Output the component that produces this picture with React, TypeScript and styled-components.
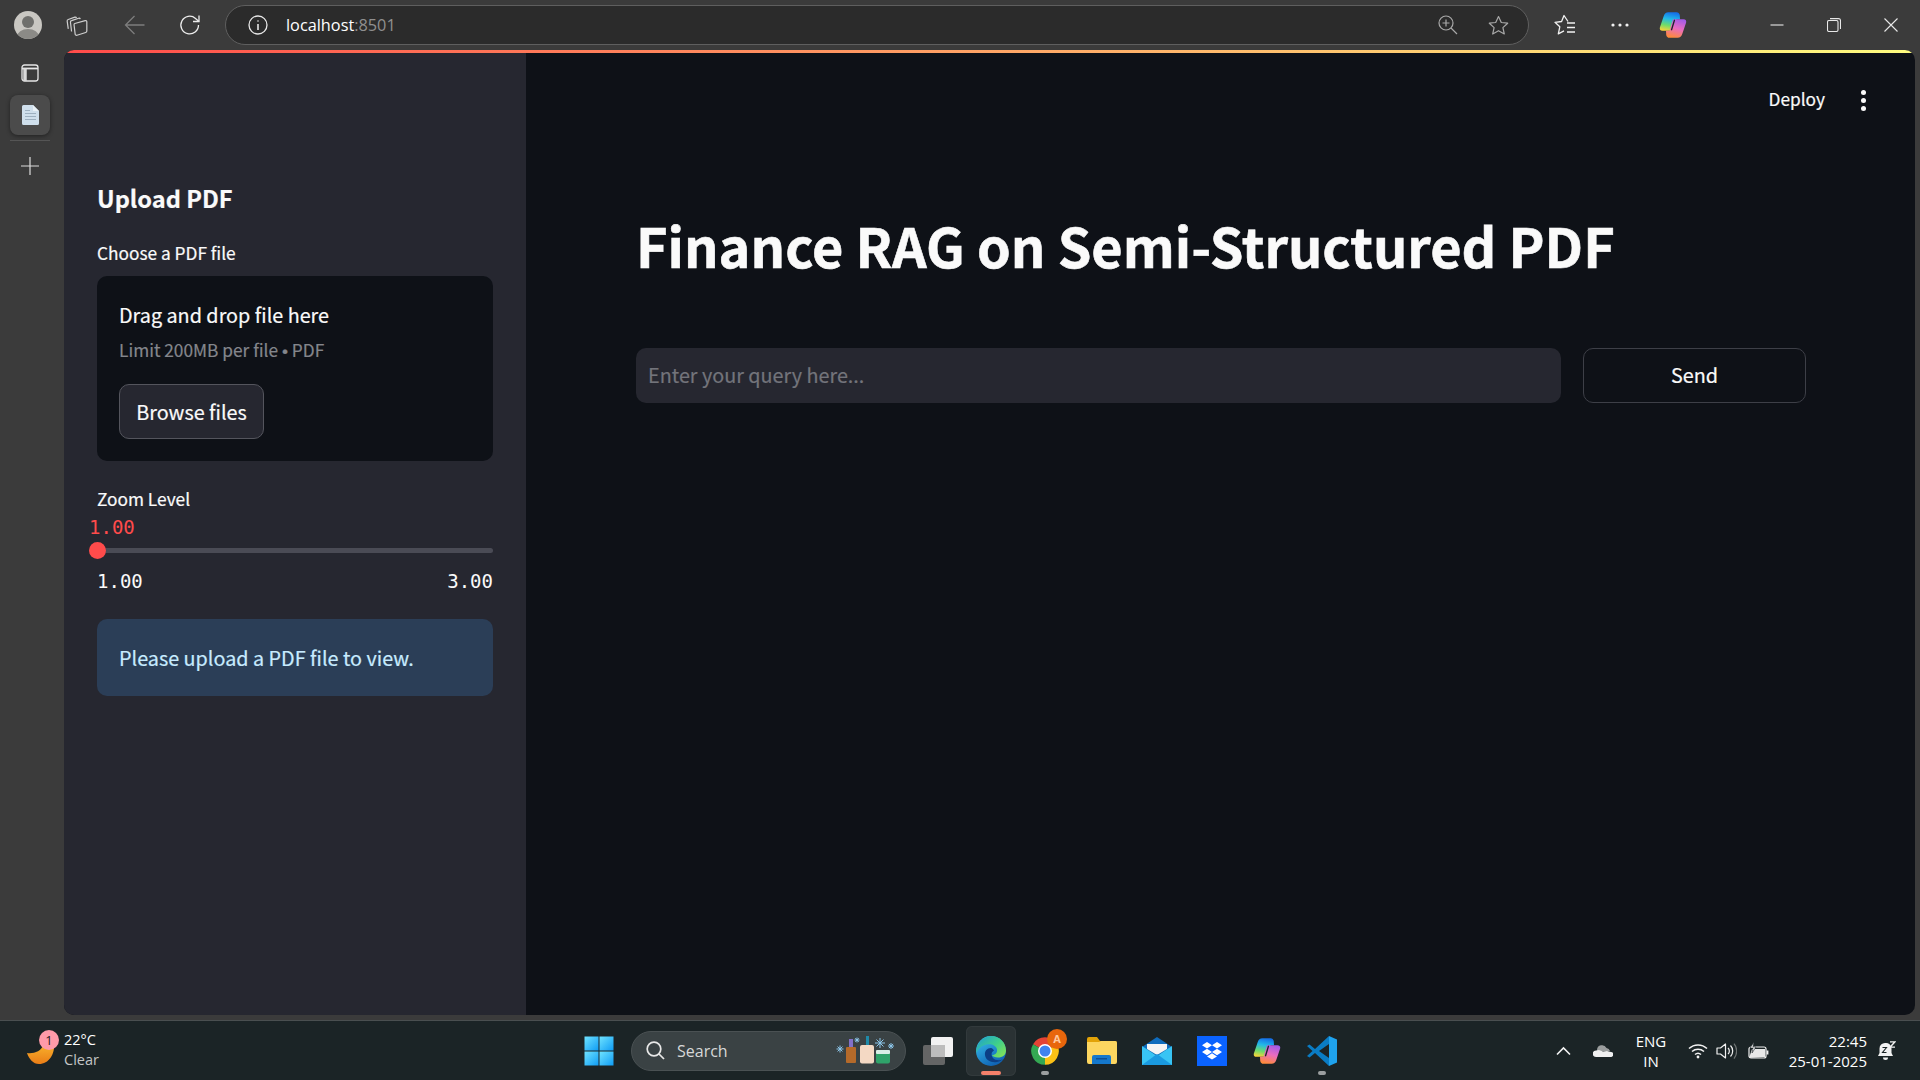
import React from "react";
import styled, { createGlobalStyle } from "styled-components";

const UI_FONT = `"Noto Sans CJK SC", "Noto Sans", sans-serif`;
const OS_FONT = `"Open Sans", "Noto Sans", sans-serif`;
const MONO_FONT = `"DejaVu Sans Mono", "Liberation Mono", monospace`;

const GlobalStyle = createGlobalStyle`
    html, body {
        margin: 0;
        padding: 0;
        width: 1920px;
        height: 1080px;
        overflow: hidden;
        background: #3b3b3b;
    }
    * {
        box-sizing: border-box;
    }
`;

const Page = styled.div`
    width: 1920px;
    height: 1080px;
    display: flex;
    flex-direction: column;
    background: #3b3b3b;
`;

/* browser toolbar */
const Toolbar = styled.div`
    height: 50px;
    flex: none;
    display: flex;
    align-items: center;
    color: #e8e8e8;
`;

const Slot = styled.div<{ $w: number; $ml?: number }>`
    width: ${(p) => p.$w}px;
    margin-left: ${(p) => p.$ml ?? 0}px;
    flex: none;
    display: flex;
    align-items: center;
    justify-content: center;
`;

const Avatar = styled.div`
    width: 28px;
    height: 28px;
    border-radius: 50%;
    background: #c9c7c2;
    overflow: hidden;
    display: flex;
`;

const AddressBar = styled.div`
    width: 1304px;
    height: 40px;
    margin-left: 7px;
    flex: none;
    display: flex;
    align-items: center;
    background: #2b2b2b;
    border: 1px solid #5f5f5f;
    border-radius: 20px;
`;

const InfoSlot = styled.div`
    width: 60px;
    flex: none;
    display: flex;
    justify-content: center;
    padding-left: 3px;
`;

const Url = styled.div`
    flex: 1;
    font-family: ${OS_FONT};
    font-size: 16.3px;
    color: #fff;
`;

const UrlPort = styled.span`
    color: #8f8f8f;
`;

const AddressIcons = styled.div`
    display: flex;
    align-items: center;
    gap: 30px;
    padding-right: 19px;
`;

const WindowButtons = styled.div`
    margin-left: 41px;
    display: flex;
`;

/* middle part */
const Middle = styled.div`
    flex: 1;
    min-height: 0;
    display: flex;
    padding: 0 5px 5px 0;
`;

const Rail = styled.div`
    width: 64px;
    flex: none;
    padding: 3px 14px 0 10px;
    display: flex;
    flex-direction: column;
`;

const RailButton = styled.div<{ $active?: boolean; $mt?: number }>`
    width: 40px;
    height: 40px;
    margin-top: ${(p) => p.$mt ?? 0}px;
    border-radius: 8px;
    display: flex;
    align-items: center;
    justify-content: center;
    background: ${(p) => (p.$active ? "#4b4b4b" : "transparent")};
    box-shadow: ${(p) => (p.$active ? "0 1px 4px rgba(0,0,0,0.45)" : "none")};
`;

const RailDivider = styled.div`
    height: 1px;
    margin-top: 5px;
    background: #555;
`;

const Window = styled.div`
    flex: 1;
    min-width: 0;
    display: flex;
    flex-direction: column;
    border-radius: 10px;
    overflow: hidden;
    background: #0e1117;
`;

const Decoration = styled.div`
    height: 3px;
    flex: none;
    background: linear-gradient(90deg, #ff4b4b, #fffd80);
`;

const AppRow = styled.div`
    flex: 1;
    min-height: 0;
    display: flex;
`;

const Sidebar = styled.aside`
    width: 462px;
    flex: none;
    background: #262730;
    padding: 127px 33px 0;
    display: flex;
    flex-direction: column;
    font-family: ${UI_FONT};
    color: #fafafa;
    -webkit-text-stroke: 0.2px currentColor;
`;

const SideHeading = styled.h2`
    margin: 0;
    font-size: 23.6px;
    line-height: 36px;
    font-weight: 700;
`;

const FieldLabel = styled.label<{ $mt: number }>`
    display: block;
    margin-top: ${(p) => p.$mt}px;
    font-size: 17.3px;
    line-height: 28px;
    font-weight: 400;
`;

const Dropzone = styled.div`
    margin-top: 9px;
    height: 185px;
    padding: 24px 22px 0;
    background: #0e1117;
    border-radius: 10px;
`;

const DropTitle = styled.div`
    font-size: 19.8px;
    line-height: 30px;
`;

const DropHint = styled.div`
    margin-top: 7px;
    font-size: 17.3px;
    line-height: 26px;
    color: #84868c;
`;

const Bullet = styled.span`
    font-family: "Liberation Sans", sans-serif;
`;

const BrowseButton = styled.button`
    margin-top: 20px;
    width: 145px;
    height: 55px;
    background: #262730;
    border: 1px solid #54555d;
    border-radius: 10px;
    color: #fafafa;
    font-family: ${UI_FONT};
    font-size: 19.8px;
    padding: 0 0 1px;
    -webkit-text-stroke: 0.2px currentColor;
`;

const SliderValue = styled.div`
    margin: 2px 0 0 -8px;
    font-family: ${MONO_FONT};
    font-size: 19px;
    line-height: 24px;
    color: #ff4b4b;
    -webkit-text-stroke: 0;
`;

const SliderTrack = styled.div`
    position: relative;
    margin-top: 3px;
    height: 16px;
    display: flex;
    align-items: center;
`;

const SliderRail = styled.div`
    width: 100%;
    height: 5px;
    border-radius: 3px;
    background: #4a4b55;
`;

const SliderThumb = styled.div`
    position: absolute;
    left: -8px;
    top: -0.5px;
    width: 17px;
    height: 17px;
    border-radius: 50%;
    background: #ff4b4b;
`;

const SliderTicks = styled.div`
    margin-top: 10px;
    display: flex;
    justify-content: space-between;
    font-family: ${MONO_FONT};
    font-size: 19px;
    line-height: 26px;
    color: #fafafa;
    -webkit-text-stroke: 0;
`;

const InfoBox = styled.div`
    margin-top: 25px;
    height: 77px;
    padding: 0 22px 1px;
    display: flex;
    align-items: center;
    background: #2b3e57;
    border-radius: 10px;
    font-size: 19.8px;
    color: #c7ebff;
`;

const Main = styled.main`
    flex: 1;
    min-width: 0;
    display: flex;
    flex-direction: column;
    font-family: ${UI_FONT};
    color: #fafafa;
`;

const Header = styled.header`
    height: 94px;
    flex: none;
    padding-right: 40px;
    display: flex;
    align-items: center;
    justify-content: flex-end;
    gap: 26px;
    font-size: 17.3px;
`;

const DeployLabel = styled.span`
    margin-bottom: 4px;
    -webkit-text-stroke: 0.2px currentColor;
`;

const Kebab = styled.div`
    width: 24px;
    display: flex;
    flex-direction: column;
    align-items: center;
    gap: 3px;
`;

const KebabDot = styled.span`
    width: 5px;
    height: 5px;
    border-radius: 50%;
    background: #fafafa;
`;

const Body = styled.div`
    padding: 57px 109px 0 110px;
`;

const Title = styled.h1`
    margin: 0;
    font-size: 54px;
    line-height: 82px;
    font-weight: 700;
    -webkit-text-stroke: 0.6px currentColor;
`;

const QueryRow = styled.div`
    margin-top: 62px;
    display: flex;
    gap: 22px;
`;

const QueryInput = styled.input`
    flex: 1;
    min-width: 0;
    height: 55px;
    padding: 0 12px 2px;
    border: none;
    outline: none;
    border-radius: 10px;
    background: #262730;
    color: #fafafa;
    font-family: ${UI_FONT};
    font-size: 19.8px;
    -webkit-text-stroke: 0.2px currentColor;
    &::placeholder {
        color: #73747b;
        opacity: 1;
    }
`;

const SendButton = styled.button`
    width: 223px;
    height: 55px;
    flex: none;
    background: #0e1117;
    border: 1px solid #3d3f47;
    border-radius: 10px;
    color: #fafafa;
    font-family: ${UI_FONT};
    font-size: 19.8px;
    padding: 0 0 2px;
    -webkit-text-stroke: 0.2px currentColor;
`;

/* taskbar */
const Taskbar = styled.footer`
    height: 60px;
    flex: none;
    display: flex;
    align-items: center;
    background: #1b2426;
    border-top: 1px solid #4a4f50;
    font-family: ${OS_FONT};
    color: #fff;
`;

const Weather = styled.div`
    width: 571px;
    flex: none;
    display: flex;
    align-items: center;
    padding-left: 27px;
    position: relative;
`;

const MoonWrap = styled.div`
    display: flex;
    margin-top: 7px;
`;

const WeatherBadge = styled.div`
    position: absolute;
    left: 39px;
    top: -2px;
    width: 20px;
    height: 20px;
    border-radius: 50%;
    background: #ff9aa9;
    color: #2a1a1c;
    font-size: 13px;
    line-height: 20px;
    text-align: center;
`;

const WeatherText = styled.div`
    margin-left: 9px;
    font-size: 14.5px;
    line-height: 20px;
    margin-top: -2px;
`;

const Muted = styled.div`
    color: #c4c6c6;
`;

const TaskIcon = styled.div<{ $w?: number; $active?: boolean }>`
    position: relative;
    width: ${(p) => p.$w ?? 55}px;
    height: 50px;
    flex: none;
    display: flex;
    align-items: center;
    justify-content: center;
    border-radius: 6px;
    background: ${(p) => (p.$active ? "#2a3234" : "transparent")};
    box-shadow: ${(p) => (p.$active ? "inset 0 0 0 1px #323a3c" : "none")};
`;

const RunPill = styled.span<{ $active?: boolean }>`
    position: absolute;
    left: 50%;
    bottom: 1px;
    transform: translateX(-50%);
    width: ${(p) => (p.$active ? 20 : 8)}px;
    height: 4px;
    border-radius: 2px;
    background: ${(p) => (p.$active ? "#f4806a" : "#9b9fa0")};
`;

const ChromeBadge = styled.span`
    position: absolute;
    left: 31px;
    top: 3px;
    width: 20px;
    height: 20px;
    border-radius: 50%;
    background: #e8660c;
    color: #ffc9a0;
    font-size: 11px;
    font-weight: 700;
    line-height: 20px;
    text-align: center;
`;

const SearchPill = styled.div`
    width: 275px;
    height: 40px;
    margin: 0 3px 0 5px;
    flex: none;
    display: flex;
    align-items: center;
    padding: 0 9px 0 14px;
    background: #3a4244;
    border: 1px solid #4a5153;
    border-radius: 20px;
    font-size: 16px;
    color: #d6d8d8;
`;

const SearchText = styled.span`
    flex: 1;
    margin-left: 12px;
`;

const Tray = styled.div`
    margin-left: auto;
    padding-right: 13px;
    display: flex;
    align-items: center;
`;

const TrayText = styled.div<{ $w: number }>`
    width: ${(p) => p.$w}px;
    flex: none;
    font-size: 15px;
    line-height: 20px;
    text-align: center;
`;

const Clock = styled.div`
    width: 91px;
    flex: none;
    font-size: 15px;
    line-height: 20px;
    text-align: right;
    white-space: nowrap;
`;

/* icons */
function Tabs() {
    return (
        <svg width="24" height="24" viewBox="0 0 22 22" fill="none" stroke="#cfcfcf" strokeWidth="1.1">
            <path d="M3 14.5 2 7.5c-.1-.8.3-1.3 1-1.5l6-2.2c.8-.2 1.3.1 1.5.8" />
            <path d="M6 17 5 8.5c-.1-.8.3-1.3 1-1.5l6.5-2.2c.8-.2 1.3.1 1.5.8" />
            <path d="M9 9.6 18.5 7c.8-.2 1.5.3 1.5 1.1v8.4c0 .7-.4 1.2-1 1.4L11 20.4c-.9.2-1.6-.3-1.7-1.2L8.3 10.800c-.1-.6.2-1 .7-1.2Z" />
        </svg>
    );
}

function Back() {
    return (
        <svg width="22" height="22" viewBox="0 0 22 22" fill="none" stroke="#7d7d7d" strokeWidth="1.3">
            <path d="M1.5 11h19M10.5 2 1.5 11l9 9" />
        </svg>
    );
}

function Refresh() {
    return (
        <svg width="22" height="22" viewBox="0 0 22 22" fill="none" stroke="#ededed" strokeWidth="1.3">
            <path d="M19.5 11a8.8 8.8 0 1 1-3-6.6L20 7.5" />
            <path d="M20 1.5v6h-6" />
        </svg>
    );
}

function Info() {
    return (
        <svg width="20" height="20" viewBox="0 0 20 20" fill="none" stroke="#e8e8e8" strokeWidth="1.3">
            <circle cx="10" cy="10" r="9" />
            <path d="M10 9v6" strokeWidth="1.6" />
            <circle cx="10" cy="6" r=".8" fill="#e8e8e8" stroke="none" />
        </svg>
    );
}

function ZoomIn() {
    return (
        <svg width="20" height="20" viewBox="0 0 20 20" fill="none" stroke="#a8a8a8" strokeWidth="1.2">
            <circle cx="8" cy="8" r="7" />
            <path d="M13 13l6 6M4.5 8h7M8 4.5v7" />
        </svg>
    );
}

function StarIcon() {
    return (
        <svg width="21" height="21" viewBox="0 0 21 21" fill="none" stroke="#a8a8a8" strokeWidth="1.2">
            <path d="M10.5 1.5l2.8 6 6.4.7-4.8 4.4 1.4 6.4-5.8-3.3-5.8 3.3 1.4-6.4L1.3 8.2l6.4-.7z" strokeLinejoin="round" />
        </svg>
    );
}

function Favorites() {
    return (
        <svg width="22" height="22" viewBox="0 0 22 22" fill="none" stroke="#f2f2f2" strokeWidth="1.3">
            <path d="M14 7.5 10 1.5 7.6 7.5 1 8.3l4.8 4.5-1.5 7 5.7-3" strokeLinejoin="round" />
            <path d="M13 9h8M13 13.5h8M13 18h8" />
        </svg>
    );
}

function Dots() {
    return (
        <svg width="18" height="4" viewBox="0 0 18 4" fill="#f2f2f2">
            <circle cx="2" cy="2" r="1.6" />
            <circle cx="9" cy="2" r="1.6" />
            <circle cx="16" cy="2" r="1.6" />
        </svg>
    );
}

function Copilot({ id, size }: { id: string; size: number }) {
    return (
        <svg width={size} height={size} viewBox="0 0 24 24">
            <defs>
                <linearGradient id={id + "a"} x1="0.5" y1="0" x2="0.3" y2="1">
                    <stop offset="0" stopColor="#1570e8" />
                    <stop offset="0.35" stopColor="#22b8e8" />
                    <stop offset="0.7" stopColor="#6fdc6a" />
                    <stop offset="1" stopColor="#f8d43a" />
                </linearGradient>
                <linearGradient id={id + "b"} x1="0.7" y1="0" x2="0.4" y2="1">
                    <stop offset="0" stopColor="#a25be8" />
                    <stop offset="0.5" stopColor="#ea6cc0" />
                    <stop offset="1" stopColor="#ff8a3c" />
                </linearGradient>
            </defs>
            <path
                d="M8 1H15C16.500 1 17.500 2 17.800 3.500L18 7H15L12 17H3C1 17 .3 15.500 .8 14L4 4.500C4.700 2.300 6 1 8 1Z"
                fill={`url(#${id}a)`}
            />
            <path
                d="M16 23H9C7.500 23 6.500 22 6.200 20.500L6 17H9L12 7H21C23 7 23.700 8.500 23.200 10L20 19.500C19.300 21.700 18 23 16 23Z"
                fill={`url(#${id}b)`}
            />
            <path d="M13.200 8 10.800 16" stroke="#20242a" strokeWidth="1.200" strokeLinecap="round" />
        </svg>
    );
}

function Minimize() {
    return (
        <svg width="14" height="14" viewBox="0 0 14 14" stroke="#e8e8e8" strokeWidth="1.1">
            <path d="M0.5 7h13" />
        </svg>
    );
}

function Restore() {
    return (
        <svg width="14" height="14" viewBox="0 0 14 14" fill="none" stroke="#e8e8e8" strokeWidth="1.1">
            <rect x="0.5" y="2.5" width="10.5" height="11" rx="1.5" />
            <path d="M3 .6h8.500c1 0 2 1 2 2V11" />
        </svg>
    );
}

function Close() {
    return (
        <svg width="14" height="14" viewBox="0 0 14 14" stroke="#e8e8e8" strokeWidth="1.1">
            <path d="M.5.5l13 13M13.500.5l-13 13" />
        </svg>
    );
}

function PanelIcon() {
    return (
        <svg width="18" height="18" viewBox="0 0 18 18" fill="none" stroke="#e6e6e6" strokeWidth="1.3">
            <rect x="1" y="1" width="16" height="16" rx="2.5" />
            <path d="M1 4.500h16" strokeWidth="1.800" />
            <path d="M4 4.500V17" strokeWidth="3.500" stroke="#d9d9d9" />
        </svg>
    );
}

function DocIcon() {
    return (
        <svg width="17" height="20" viewBox="0 0 17 20">
            <path d="M1.500 0H11l6 6v12.500a1.500 1.500 0 0 1-1.500 1.500h-14A1.500 1.500 0 0 1 0 18.500V1.500A1.500 1.500 0 0 1 1.500 0Z" fill="#cfdfec" />
            <path d="M11 0l6 6h-6z" fill="#e9f1f7" />
            <path d="M3 5.500h5M3 8.500h11M3 11.500h11M3 14.500h11" stroke="#9db0c0" strokeWidth="1" />
        </svg>
    );
}

function PlusIcon() {
    return (
        <svg width="18" height="18" viewBox="0 0 18 18" stroke="#dcdcdc" strokeWidth="1.2">
            <path d="M9 0v18M0 9h18" />
        </svg>
    );
}

function Moon() {
    return (
        <svg width="28" height="20" viewBox="0 0 28 20">
            <defs>
                <linearGradient id="moon" x1="0" y1="0" x2="0" y2="1">
                    <stop offset="0" stopColor="#f8b32c" />
                    <stop offset="1" stopColor="#ea7d17" />
                </linearGradient>
            </defs>
            <path d="M0 9c6 1 14-1 17-9h10c1 10-5 20-15 20C6 20 2 15 0 9Z" fill="url(#moon)" />
        </svg>
    );
}

function WindowsLogo() {
    return (
        <svg width="30" height="30" viewBox="0 0 30 30">
            <defs>
                <linearGradient id="win" x1="0" y1="0" x2="1" y2="1">
                    <stop offset="0" stopColor="#6fe3ff" />
                    <stop offset="1" stopColor="#0f9cf5" />
                </linearGradient>
            </defs>
            <rect x="0.500" y="0.500" width="14" height="14" fill="url(#win)" />
            <rect x="15.500" y="0.500" width="14" height="14" fill="url(#win)" />
            <rect x="0.500" y="15.500" width="14" height="14" fill="url(#win)" />
            <rect x="15.500" y="15.500" width="14" height="14" fill="url(#win)" />
        </svg>
    );
}

function SearchGlass() {
    return (
        <svg width="19" height="19" viewBox="0 0 19 19" fill="none" stroke="#e8e8e8" strokeWidth="1.7">
            <circle cx="8" cy="8" r="6.800" />
            <path d="M13 13l5 5" />
        </svg>
    );
}

function Flake({ x, y, r }: { x: number; y: number; r: number }) {
    const d = r * 0.7;
    return (
        <path
            d={`M${x - r} ${y}h${r * 2}M${x} ${y - r}v${r * 2}M${x - d} ${y - d}l${d * 2} ${d * 2}M${x + d} ${y - d}l${-d * 2} ${d * 2}`}
            stroke="#8cc6ea"
            strokeWidth="1"
        />
    );
}

function Bottles() {
    return (
        <svg width="60" height="30" viewBox="0 0 60 30">
            <Flake x={4} y={13} r={3.500} />
            <Flake x={21} y={4} r={2.500} />
            <Flake x={44} y={7} r={5} />
            <Flake x={55} y={10} r={3} />
            <rect x="13" y="3" width="4" height="9" fill="#8270c8" />
            <rect x="10" y="11" width="10" height="16" rx="1" fill="#b56a2a" />
            <rect x="30" y="0" width="3" height="9" fill="#1f8aa8" />
            <rect x="24" y="9" width="14" height="18.500" rx="2" fill="#f4d9c4" />
            <rect x="40" y="15" width="14" height="12.500" rx="2" fill="#2fa36a" />
            <rect x="40" y="14" width="14" height="4" rx="1" fill="#d8efe6" />
        </svg>
    );
}

function TaskView() {
    return (
        <svg width="30" height="28" viewBox="0 0 30 28">
            <rect x="8" y="0" width="22" height="20" rx="2" fill="#f2f2f2" />
            <rect x="0" y="8" width="22" height="20" rx="2" fill="#6d6d6d" opacity="0.9" />
            <rect x="8" y="8" width="14" height="12" fill="#bdbdbd" />
        </svg>
    );
}

function Edge() {
    return (
        <svg width="30" height="30" viewBox="0 0 30 30">
            <defs>
                <linearGradient id="edgeA" x1="0" y1="0" x2="0.6" y2="1">
                    <stop offset="0" stopColor="#3bc6f0" />
                    <stop offset="1" stopColor="#0f62b4" />
                </linearGradient>
                <linearGradient id="edgeB" x1="0" y1="0" x2="1" y2="0.8">
                    <stop offset="0" stopColor="#1d9ad6" />
                    <stop offset="0.6" stopColor="#3fd08a" />
                    <stop offset="1" stopColor="#7fe05a" />
                </linearGradient>
            </defs>
            <circle cx="15" cy="15" r="15" fill="url(#edgeA)" />
            <path
                d="M15 0C24 0 30 7 30 14.500C30 19 26.500 21.500 22 21.500C19 21.500 16.500 20.500 16 19C19.500 19 21.500 16.500 21 13.500C20.300 9.500 15.500 7.500 10.500 8.500C5.500 9.500 2 13 0 17C0 8 6.500 0 15 0Z"
                fill="url(#edgeB)"
            />
            <path
                d="M15 12C11 12 8.500 15 9 19C9.500 24 15 27 21 26C23.500 25.500 25.500 24.500 27 23C24 25 19 24.500 17 22C15 19.500 15 16 18 14.500C17 13 16 12 15 12Z"
                fill="#0c3f86"
            />
        </svg>
    );
}

function Chrome() {
    return (
        <svg width="30" height="30" viewBox="0 0 24 24">
            <path d="M12 12 21.530 6.500A11 11 0 0 0 2.470 6.500Z" fill="#e54335" />
            <path d="M12 12 2.470 6.500A11 11 0 0 0 12 23Z" fill="#34a853" />
            <path d="M12 12V23A11 11 0 0 0 21.530 6.500Z" fill="#fbc116" />
            <circle cx="12" cy="12" r="5.600" fill="#fff" />
            <circle cx="12" cy="12" r="4.400" fill="#3f83f0" />
        </svg>
    );
}

function Folder() {
    return (
        <svg width="30" height="27" viewBox="0 0 30 27">
            <path d="M0 2a2 2 0 0 1 2-2h8l3 4h15a2 2 0 0 1 2 2v4H0Z" fill="#e2a308" />
            <path d="M0 5h12l2-1h14a2 2 0 0 1 2 2v19a2 2 0 0 1-2 2H2a2 2 0 0 1-2-2Z" fill="#fcd660" />
            <path d="M5 20a2 2 0 0 1 2-2h15a2 2 0 0 1 2 2v7H5Z" fill="#1578cc" />
            <rect x="9" y="21" width="11" height="1.500" fill="#0c4f96" />
        </svg>
    );
}

function Mail() {
    return (
        <svg width="30" height="28" viewBox="0 0 30 28">
            <path d="M0 10 15 0l15 10-15 9z" fill="#0f6cbd" />
            <path d="M5 7h20v5l-10 6-10-6z" fill="#f4f4f4" />
            <path d="M0 9l15 10L30 9v19H0z" fill="#38c4f4" />
            <path d="M0 28 15 17l15 11z" fill="#1a9ae0" />
        </svg>
    );
}

function Dropbox() {
    return (
        <svg width="30" height="30" viewBox="0 0 30 30">
            <rect width="30" height="30" fill="#0a63ff" />
            <path d="M10 6l5 3.200-5 3.200-5-3.200zM20 6l5 3.200-5 3.200-5-3.200zM10 12.800l5 3.200-5 3.200-5-3.200zM20 12.800l5 3.200-5 3.200-5-3.200zM10 20.400l5-3.200 5 3.200-5 3.200z" fill="#fff" />
        </svg>
    );
}

function VSCode() {
    return (
        <svg width="30" height="30" viewBox="0 0 30 30">
            <path d="M22 0 8 13 2.500 8.500 0 10l5.500 5L0 20l2.500 1.500L8 17l14 13z" fill="#0a7cc4" />
            <path d="M22 0l8 3.500v23L22 30V0z" fill="#1fa3ee" />
            <path d="M22 8v14L12 15z" fill="#1b2426" />
        </svg>
    );
}

function Chevron() {
    return (
        <svg width="15" height="10" viewBox="0 0 15 10" fill="none" stroke="#f2f2f2" strokeWidth="1.600">
            <path d="M1 8.500l6.500-6.500 6.500 6.500" />
        </svg>
    );
}

function OneDrive() {
    return (
        <svg width="20" height="13" viewBox="0 0 20 13">
            <path d="M4 6a5 5 0 0 1 9.500-2A4 4 0 0 1 17 7H4z" fill="#9a9d9d" />
            <path d="M3 13a3 3 0 0 1 0-6.500l3-.5 4 1.500 4-.5 4 1a2.500 2.500 0 0 1-.5 5z" fill="#f0f0f0" />
        </svg>
    );
}

function Wifi() {
    return (
        <svg width="20" height="16" viewBox="0 0 20 16" fill="none" stroke="#f2f2f2" strokeWidth="1.500">
            <path d="M1 5.500a13 13 0 0 1 18 0M4 8.500a9 9 0 0 1 12 0M7 11.500a4.500 4.500 0 0 1 6 0" />
            <circle cx="10" cy="14" r="1.400" fill="#f2f2f2" stroke="none" />
        </svg>
    );
}

function Volume() {
    return (
        <svg width="21" height="18" viewBox="0 0 21 18" fill="none" stroke="#f0f0f0" strokeWidth="1.200">
            <path d="M1 6h3.500L9.500 2v14l-5-4H1z" strokeLinejoin="round" />
            <path d="M12 6a4 4 0 0 1 0 6M14.500 3.500a8 8 0 0 1 0 11" />
            <path d="M18 1.500a12 12 0 0 1 0 15" stroke="#6d7272" />
        </svg>
    );
}

function Battery() {
    return (
        <svg width="21" height="18" viewBox="0 0 21 18" fill="none" stroke="#f2f2f2" strokeWidth="1.200">
            <rect x="1" y="5" width="17" height="11" rx="2" />
            <path d="M19.500 8.500v4" strokeWidth="1.800" />
            <path d="M1 16l3-9h13v8z" fill="#e8e8e8" stroke="none" />
            <path d="M6 0 2 6h3l-1 5 4-6H5z" fill="#f2f2f2" stroke="#1b2426" strokeWidth="0.600" />
        </svg>
    );
}

function BellSnooze() {
    return (
        <svg width="18" height="20" viewBox="0 0 18 20">
            <path d="M7 2a5.500 5.500 0 0 0-5.500 5.500V12L0 15h15l-1.500-3V7.500A5.500 5.500 0 0 0 7 2Z" fill="#f2f2f2" />
            <path d="M5 16.500a2.500 2.500 0 0 0 5 0z" fill="#f2f2f2" />
            <path d="M4.500 6.500h4l-4 5h4" fill="none" stroke="#1b2426" strokeWidth="1.100" />
            <path d="M12 .8h5l-5 5.400h5" fill="none" stroke="#f2f2f2" strokeWidth="1.300" />
        </svg>
    );
}

export default function App() {
    return (
        <Page>
            <GlobalStyle />
            <Toolbar>
                <Slot $w={56}>
                    <Avatar>
                        <svg width="28" height="28" viewBox="0 0 28 28">
                            <circle cx="14" cy="11" r="6" fill="#6f6f6c" />
                            <ellipse cx="14" cy="26" rx="11" ry="8" fill="#8b8a86" />
                        </svg>
                    </Avatar>
                </Slot>
                <Slot $w={42}>
                    <Tabs />
                </Slot>
                <Slot $w={54} $ml={10}>
                    <Back />
                </Slot>
                <Slot $w={56}>
                    <Refresh />
                </Slot>
                <AddressBar>
                    <InfoSlot>
                        <Info />
                    </InfoSlot>
                    <Url>
                        localhost<UrlPort>:8501</UrlPort>
                    </Url>
                    <AddressIcons>
                        <ZoomIn />
                        <StarIcon />
                    </AddressIcons>
                </AddressBar>
                <Slot $w={72}>
                    <Favorites />
                </Slot>
                <Slot $w={38}>
                    <Dots />
                </Slot>
                <Slot $w={68}>
                    <Copilot id="topCopilot" size={28} />
                </Slot>
                <WindowButtons>
                    <Slot $w={57}>
                        <Minimize />
                    </Slot>
                    <Slot $w={57}>
                        <Restore />
                    </Slot>
                    <Slot $w={58}>
                        <Close />
                    </Slot>
                </WindowButtons>
            </Toolbar>
            <Middle>
                <Rail>
                    <RailButton>
                        <PanelIcon />
                    </RailButton>
                    <RailButton $active $mt={2}>
                        <DocIcon />
                    </RailButton>
                    <RailDivider />
                    <RailButton $mt={5}>
                        <PlusIcon />
                    </RailButton>
                </Rail>
                <Window>
                    <Decoration />
                    <AppRow>
                        <Sidebar>
                            <SideHeading>Upload PDF</SideHeading>
                            <FieldLabel $mt={23}>Choose a PDF file</FieldLabel>
                            <Dropzone>
                                <DropTitle>Drag and drop file here</DropTitle>
                                <DropHint>
                                    Limit 200MB per file <Bullet>•</Bullet> PDF
                                </DropHint>
                                <BrowseButton>Browse files</BrowseButton>
                            </Dropzone>
                            <FieldLabel $mt={24}>Zoom Level</FieldLabel>
                            <SliderValue>1.00</SliderValue>
                            <SliderTrack>
                                <SliderRail />
                                <SliderThumb />
                            </SliderTrack>
                            <SliderTicks>
                                <span>1.00</span>
                                <span>3.00</span>
                            </SliderTicks>
                            <InfoBox>Please upload a PDF file to view.</InfoBox>
                        </Sidebar>
                        <Main>
                            <Header>
                                <DeployLabel>Deploy</DeployLabel>
                                <Kebab>
                                    <KebabDot />
                                    <KebabDot />
                                    <KebabDot />
                                </Kebab>
                            </Header>
                            <Body>
                                <Title>Finance RAG on Semi-Structured PDF</Title>
                                <QueryRow>
                                    <QueryInput placeholder="Enter your query here..." readOnly />
                                    <SendButton>Send</SendButton>
                                </QueryRow>
                            </Body>
                        </Main>
                    </AppRow>
                </Window>
            </Middle>
            <Taskbar>
                <Weather>
                    <MoonWrap>
                        <Moon />
                    </MoonWrap>
                    <WeatherBadge>1</WeatherBadge>
                    <WeatherText>
                        <div>22°C</div>
                        <Muted>Clear</Muted>
                    </WeatherText>
                </Weather>
                <TaskIcon>
                    <WindowsLogo />
                </TaskIcon>
                <SearchPill>
                    <SearchGlass />
                    <SearchText>Search</SearchText>
                    <Bottles />
                </SearchPill>
                <TaskIcon $w={57}>
                    <TaskView />
                </TaskIcon>
                <TaskIcon $active $w={50}>
                    <Edge />
                    <RunPill $active />
                </TaskIcon>
                <TaskIcon $w={58}>
                    <Chrome />
                    <ChromeBadge>A</ChromeBadge>
                    <RunPill />
                </TaskIcon>
                <TaskIcon>
                    <Folder />
                </TaskIcon>
                <TaskIcon>
                    <Mail />
                </TaskIcon>
                <TaskIcon>
                    <Dropbox />
                </TaskIcon>
                <TaskIcon>
                    <Copilot id="barCopilot" size={28} />
                </TaskIcon>
                <TaskIcon>
                    <VSCode />
                    <RunPill />
                </TaskIcon>
                <Tray>
                    <Slot $w={50}>
                        <Chevron />
                    </Slot>
                    <Slot $w={30}>
                        <OneDrive />
                    </Slot>
                    <TrayText $w={66}>
                        ENG
                        <br />
                        IN
                    </TrayText>
                    <Slot $w={28}>
                        <Wifi />
                    </Slot>
                    <Slot $w={28}>
                        <Volume />
                    </Slot>
                    <Slot $w={36}>
                        <Battery />
                    </Slot>
                    <Clock>
                        22:45
                        <br />
                        25-01-2025
                    </Clock>
                    <Slot $w={40}>
                        <BellSnooze />
                    </Slot>
                </Tray>
            </Taskbar>
        </Page>
    );
}
